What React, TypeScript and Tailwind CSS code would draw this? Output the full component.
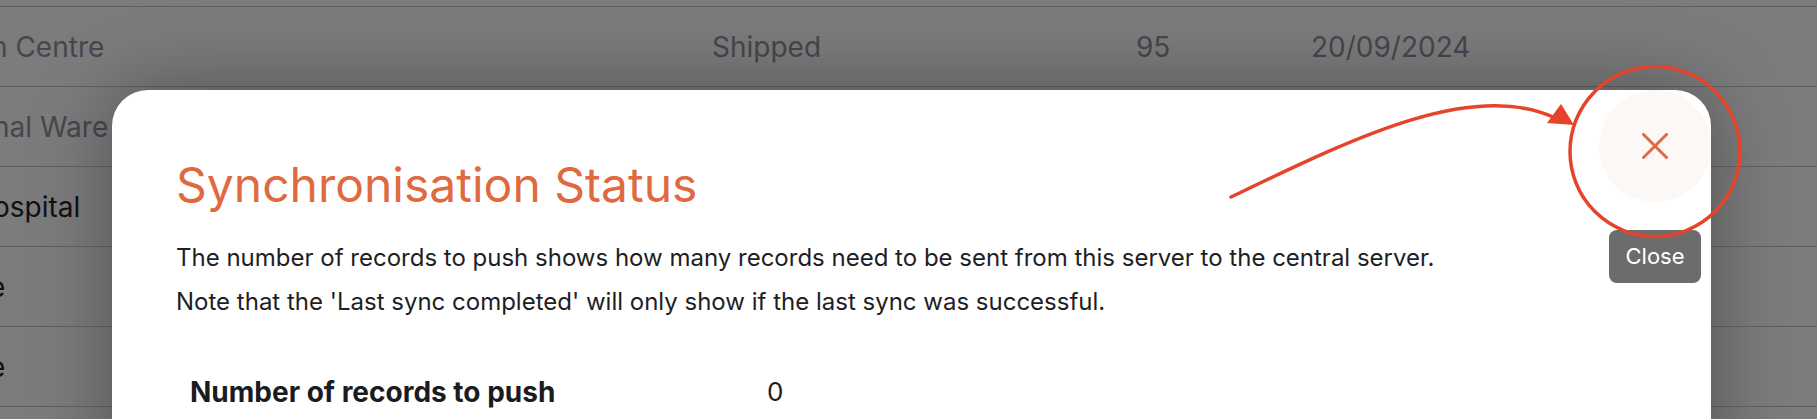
import React from "react";

const rows = [
  { first: "n Centre", off: "ml-[-9px]", color: "text-[#46464f]", rest: true },
  { first: "nal Ware", off: "ml-[-7px]", color: "text-[#46464f]", rest: false },
  { first: "ospital", off: "ml-[-7px]", color: "text-[#111114]", rest: false },
  { first: "e", off: "ml-[-11px]", color: "text-[#111114]", rest: false },
  { first: "e", off: "ml-[-11px]", color: "text-[#111114]", rest: false },
  { first: "", off: "ml-0", color: "text-[#111114]", rest: false },
];

export default function App() {
  return (
    <div className="relative h-[419px] w-[1817px] overflow-hidden bg-[#7c7c7c] font-['Inter',sans-serif]">
      {/* background table under the overlay */}
      <div className="flex flex-col pt-[6px]">
        {rows.map((r, i) => (
          <div
            key={i}
            className={`flex h-[80px] items-center border-t border-[#606067] text-[28px] ${r.color}`}
          >
            <div className="w-[712px] overflow-hidden whitespace-nowrap">
              <span className={`inline-block ${r.off}`}>{r.first}</span>
            </div>
            {r.rest && (
              <>
                <div className="w-[424px]">Shipped</div>
                <div className="w-[175px]">95</div>
                <div>20/09/2024</div>
              </>
            )}
          </div>
        ))}
      </div>

      {/* modal */}
      <div className="absolute left-[112px] top-[90px] h-[420px] w-[1599px] overflow-hidden rounded-[36px] bg-white shadow-[0_0_80px_rgba(0,0,0,0.35)]">
        <div className="pl-[64px] pt-[66px]">
          <h2 className="text-[48px] font-normal leading-[58px] text-[#df6a40]">
            Synchronisation Status
          </h2>
          <div className="mt-[22px] text-[24px] leading-[44px] text-[#1e1e24]">
            <p>
              The number of records to push shows how many records need to be sent from this server to the central server.
            </p>
            <p>Note that the 'Last sync completed' will only show if the last sync was successful.</p>
          </div>
          <div className="mt-[52px] flex text-[28px] leading-[32px] text-[#1b1b22]">
            <div className="w-[591px] pl-[14px] font-bold">Number of records to push</div>
            <div className="text-[26px]">0</div>
          </div>
        </div>
        <button className="absolute right-0 top-0 flex h-[112px] w-[112px] items-center justify-center rounded-full bg-[#fcf8f5]">
          <svg width="26" height="26" viewBox="0 0 26 26" fill="none">
            <path d="M1.5 1.5L24.5 24.5M24.5 1.5L1.5 24.5" stroke="#df6a40" strokeWidth="3" strokeLinecap="round" />
          </svg>
        </button>
      </div>

      {/* tooltip */}
      <div className="absolute left-[1609px] top-[230px] flex h-[53px] w-[92px] items-center justify-center rounded-[8px] bg-[#6c6c6c] text-[22px] text-white">
        Close
      </div>

      {/* annotation */}
      <svg
        className="pointer-events-none absolute left-0 top-0"
        width="1817"
        height="419"
        viewBox="0 0 1817 419"
        fill="none"
      >
        <path
          d="M1231 197 C1350 140 1470 80 1553 117"
          stroke="#e5432a"
          strokeWidth="3.5"
          strokeLinecap="round"
        />
        <polygon points="1547,123 1561,104 1574,125" fill="#e5432a" />
        <circle cx="1655" cy="151.5" r="85" stroke="#e5432a" strokeWidth="3.5" />
      </svg>
    </div>
  );
}
